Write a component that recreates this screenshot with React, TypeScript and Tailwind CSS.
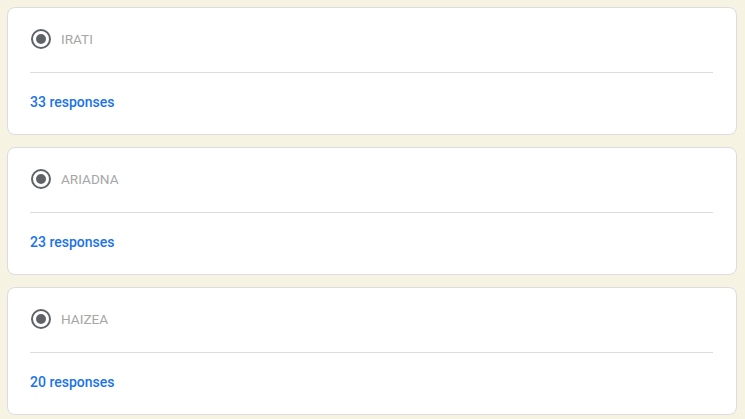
import React from "react";

const items = [
  { name: "IRATI", count: 33 },
  { name: "ARIADNA", count: 23 },
  { name: "HAIZEA", count: 20 },
];

function Radio() {
  return (
    <svg width="20" height="20" viewBox="0 0 20 20" className="shrink-0">
      <circle cx="10" cy="10" r="9" fill="none" stroke="#5f6368" strokeWidth="2" />
      <circle cx="10" cy="10" r="5" fill="#5f6368" />
    </svg>
  );
}

export default function App() {
  return (
    <div
      className="w-[745px] h-[419px] bg-[#f7f3e3] pt-[7px] pl-[7px] pr-[8px] flex flex-col gap-[12px] overflow-hidden"
      style={{ fontFamily: "Roboto, 'Liberation Sans', sans-serif" }}
    >
      {items.map((it) => (
        <div
          key={it.name}
          className="bg-white border border-[#dadce0] rounded-[8px] pt-[21px] pb-[22px] px-[22px]"
        >
          <div className="h-5 flex items-center gap-[10px] pl-px">
            <Radio />
            <span className="text-[13.6px] text-[#a6a6a6] leading-5">{it.name}</span>
          </div>
          <div className="mt-[23px] h-px bg-[#dadce0] mr-[1px]" />
          <div className="mt-[19px] leading-5 text-[14px] font-medium text-[#1a73e8]">
            {it.count} responses
          </div>
        </div>
      ))}
    </div>
  );
}
